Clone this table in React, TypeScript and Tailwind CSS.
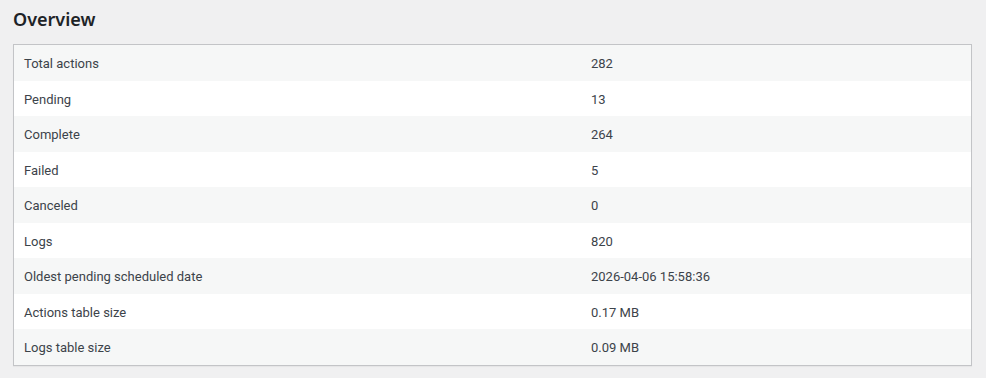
import React from "react";

const rows: [string, string][] = [
  ["Total actions", "282"],
  ["Pending", "13"],
  ["Complete", "264"],
  ["Failed", "5"],
  ["Canceled", "0"],
  ["Logs", "820"],
  ["Oldest pending scheduled date", "2026-04-06 15:58:36"],
  ["Actions table size", "0.17 MB"],
  ["Logs table size", "0.09 MB"],
];

export default function App() {
  return (
    <div
      className="min-h-[378px] w-[986px] bg-[#f0f0f1] text-[#3c434a] pl-[13px] pr-[14px] pt-[7px]"
      style={{ fontFamily: 'Roboto, "Noto Sans", sans-serif' }}
    >
      <h2 className="text-[18px] font-semibold text-[#1d2327] leading-[24px] mb-[13px]" style={{ fontFamily: '"Noto Sans", sans-serif' }}>Overview</h2>
      <div className="border border-[#c3c4c7] bg-white shadow-[0_1px_1px_rgba(0,0,0,0.04)]">
        {rows.map(([k, v], i) => (
          <div
            key={k}
            className={`grid grid-cols-[567px_1fr] text-[13px] leading-[19.5px] ${i % 2 === 0 ? "bg-[#f6f7f7]" : "bg-white"}`}
          >
            <div className="px-[10px] pt-[9px] pb-[7px]">{k}</div>
            <div className="px-[10px] pt-[9px] pb-[7px]">{v}</div>
          </div>
        ))}
      </div>
    </div>
  );
}
